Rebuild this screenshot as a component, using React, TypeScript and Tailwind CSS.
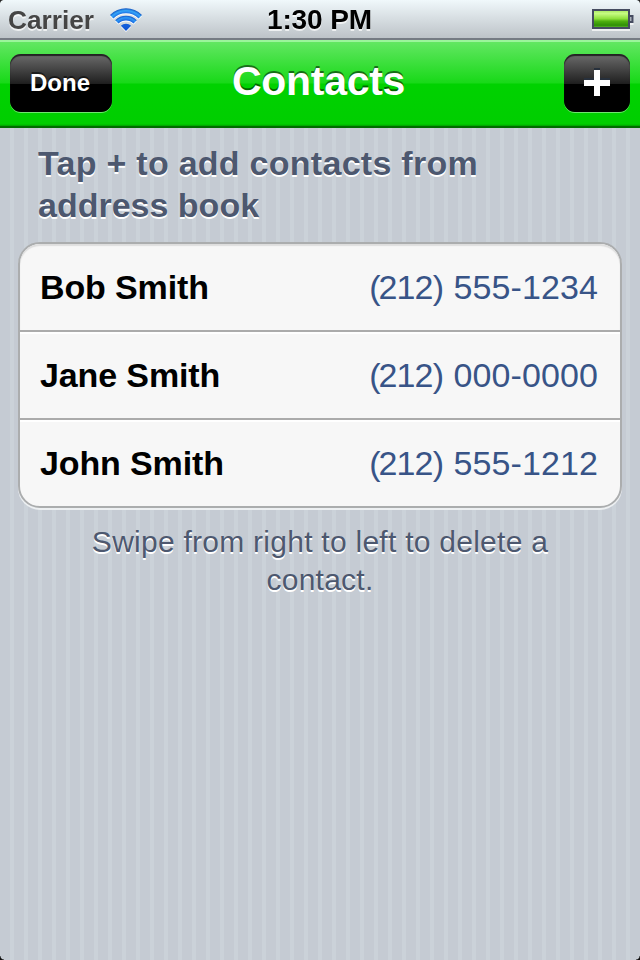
const contacts = [
  { name: 'Bob Smith', area: '212', number: '555-1234' },
  { name: 'Jane Smith', area: '212', number: '000-0000' },
  { name: 'John Smith', area: '212', number: '555-1212' },
];

function WifiIcon() {
  return (
    <svg width="34" height="26" viewBox="0 0 34 26" className="mt-[7px] ml-[15px] drop-shadow-[0_1px_0_#fff]">
      <defs>
        <radialGradient id="wifi" cx="17" cy="24" r="22.6" gradientUnits="userSpaceOnUse">
          <stop offset="0" stopColor="#0d50d0" />
          <stop offset="0.32" stopColor="#1560dc" />
          <stop offset="0.47" stopColor="#1967e0" />
          <stop offset="0.59" stopColor="#2f9af4" />
          <stop offset="0.67" stopColor="#1459cc" />
          <stop offset="0.79" stopColor="#1d74e6" />
          <stop offset="0.9" stopColor="#36a6f8" />
          <stop offset="1" stopColor="#1459c4" />
        </radialGradient>
      </defs>
      <path
        d="M1 8A22.6 22.6 0 0 1 33 8L29.6 11.4A17.8 17.8 0 0 0 4.4 11.4ZM6.2 13.2A15.3 15.3 0 0 1 27.8 13.2L24.5 16.5A10.6 10.6 0 0 0 9.5 16.5ZM11.8 18.8A7.4 7.4 0 0 1 22.2 18.8L17 24Z"
        fill="url(#wifi)"
      />
    </svg>
  );
}

function BatteryIcon() {
  return (
    <svg width="42" height="24" viewBox="0 0 42 24" className="mt-[8px] mr-[6px] ml-auto drop-shadow-[0_2px_0_#ffffffb0]">
      <defs>
        <linearGradient id="charge" x1="0" y1="0" x2="0" y2="1">
          <stop offset="0" stopColor="#a5e85c" />
          <stop offset="0.2" stopColor="#c6fb82" />
          <stop offset="0.48" stopColor="#8fe03c" />
          <stop offset="0.62" stopColor="#4fb010" />
          <stop offset="0.85" stopColor="#2f8f06" />
          <stop offset="1" stopColor="#6cc43a" />
        </linearGradient>
      </defs>
      <rect x="1" y="2" width="36" height="18" fill="url(#charge)" stroke="#454b60" strokeWidth="2" />
      <path d="M38 8h2.5v6H38" fill="#a9afb8" stroke="#454b60" strokeWidth="2" />
    </svg>
  );
}

function StatusBar() {
  return (
    <div className="flex h-10 border-b-2 border-[#757b83] bg-linear-to-b from-[#f0f8fb] to-[#bdc3c8]">
      <div className="flex w-[240px] shrink-0">
        <svg width="86" height="36" className="ml-2 overflow-visible drop-shadow-[0_2px_0_#ffffffb0]">
          <text x="0" y="29" textLength="86" lengthAdjust="spacingAndGlyphs" fill="#454545" className="text-[26px] font-bold">
            Carrier
          </text>
        </svg>
        <WifiIcon />
      </div>
      <svg width="160" height="36" className="shrink-0 overflow-visible drop-shadow-[0_2px_0_#ffffffb0]">
        <text x="27" y="29" textLength="105" fill="#000" className="text-[28px] font-bold">
          1:30 PM
        </text>
      </svg>
      <BatteryIcon />
    </div>
  );
}

const navButton =
  'flex h-[58px] items-center justify-center rounded-[11px] bg-[linear-gradient(#6c6c6c_0,#1e1e1e_30px,#000_30px,#000_100%)] text-white shadow-[0_1px_0_#ffffff70,inset_0_2px_1px_#222]';

function NavBar() {
  return (
    <div className="flex h-[88px] items-start border-b-2 border-[#006c00] bg-[linear-gradient(#9bf59b_0,#9bf59b_2px,#62e762_2px,#18d918_43px,#00d200_44px,#00ce00_84px,#009e00_86px)] px-[10px] pt-[14px]">
      <button className={`${navButton} w-[102px] pr-[2px] text-[24px] font-bold [text-shadow:0_-2px_0_#00000080]`}>
        Done
      </button>
      <h1 className="mt-[3px] flex-1 pr-[39px] text-center text-[41px] leading-[48px] font-bold tracking-[-0.3px] text-white [text-shadow:0_-2px_0_#00000080]">
        Contacts
      </h1>
      <button className={`${navButton} w-[66px] pb-[2px]`} aria-label="Add">
        <svg width="26" height="28" viewBox="0 0 26 28">
          <path d="M10 0h6v2h-6zM0 10h26v2H0z" fill="#27303c" />
          <path d="M10 2h6v10h10v6H16v10h-6V18H0v-6h10z" fill="#fff" />
        </svg>
      </button>
    </div>
  );
}

export default function App() {
  return (
    <div className="relative flex h-[960px] w-[640px] flex-col overflow-hidden bg-[repeating-linear-gradient(90deg,#c5cbd3_0,#c5cbd3_10px,#cbd2d9_10px,#cbd2d9_14px)] font-['Liberation_Sans',Arial,sans-serif]">
      <StatusBar />
      <NavBar />
      <h2 className="mt-[14px] pl-[38px] text-[34px] leading-[42px] font-bold text-[#4d586f] [text-shadow:0_2px_0_#fff]">
        <span className="tracking-[0.27px]">Tap + to add contacts from</span>
        <br />
        address book
      </h2>
      <ul className="mx-[18px] mt-[16px] rounded-[22px] border-2 border-[#abadae] bg-[#f7f7f7] shadow-[0_2px_0_#edf0f2]">
        {contacts.map((contact) => (
          <li
            key={contact.name}
            className="flex h-[88px] items-center justify-between border-b-2 border-[#ababab] pt-px pr-[22px] pl-5 text-[34px] shadow-[inset_0_2px_0_#fff] first:rounded-t-[20px] first:shadow-[inset_0_2px_1px_#dedede] last:h-[86px] last:border-b-0"
          >
            <span className="font-bold tracking-[-0.12px] text-black">{contact.name}</span>
            <span className="text-[#385487]">
              <span className="tracking-[-2.3px]">(</span>
              <span className="tracking-[-0.8px]">{contact.area}</span>) <span className="tracking-[0.1px]">{contact.number}</span>
            </span>
          </li>
        ))}
      </ul>
      <p className="mt-[15px] text-center text-[30px] leading-[38px] tracking-[0.26px] text-[#4d586f] [text-shadow:0_2px_0_#fff]">
        Swipe from right to left to delete a
        <br />
        contact.
      </p>

      {/* rounded screen corners */}
      <div className="absolute top-0 left-0 size-[4px] bg-[radial-gradient(circle_at_100%_100%,transparent_3.5px,#222_4.5px)]" />
      <div className="absolute top-0 right-0 size-[4px] bg-[radial-gradient(circle_at_0_100%,transparent_3.5px,#222_4.5px)]" />
      <div className="absolute bottom-0 left-0 size-[4px] bg-[radial-gradient(circle_at_100%_0,transparent_3px,#111_4px)]" />
      <div className="absolute right-0 bottom-0 size-[4px] bg-[radial-gradient(circle_at_0_0,transparent_3px,#111_4px)]" />
    </div>
  );
}
